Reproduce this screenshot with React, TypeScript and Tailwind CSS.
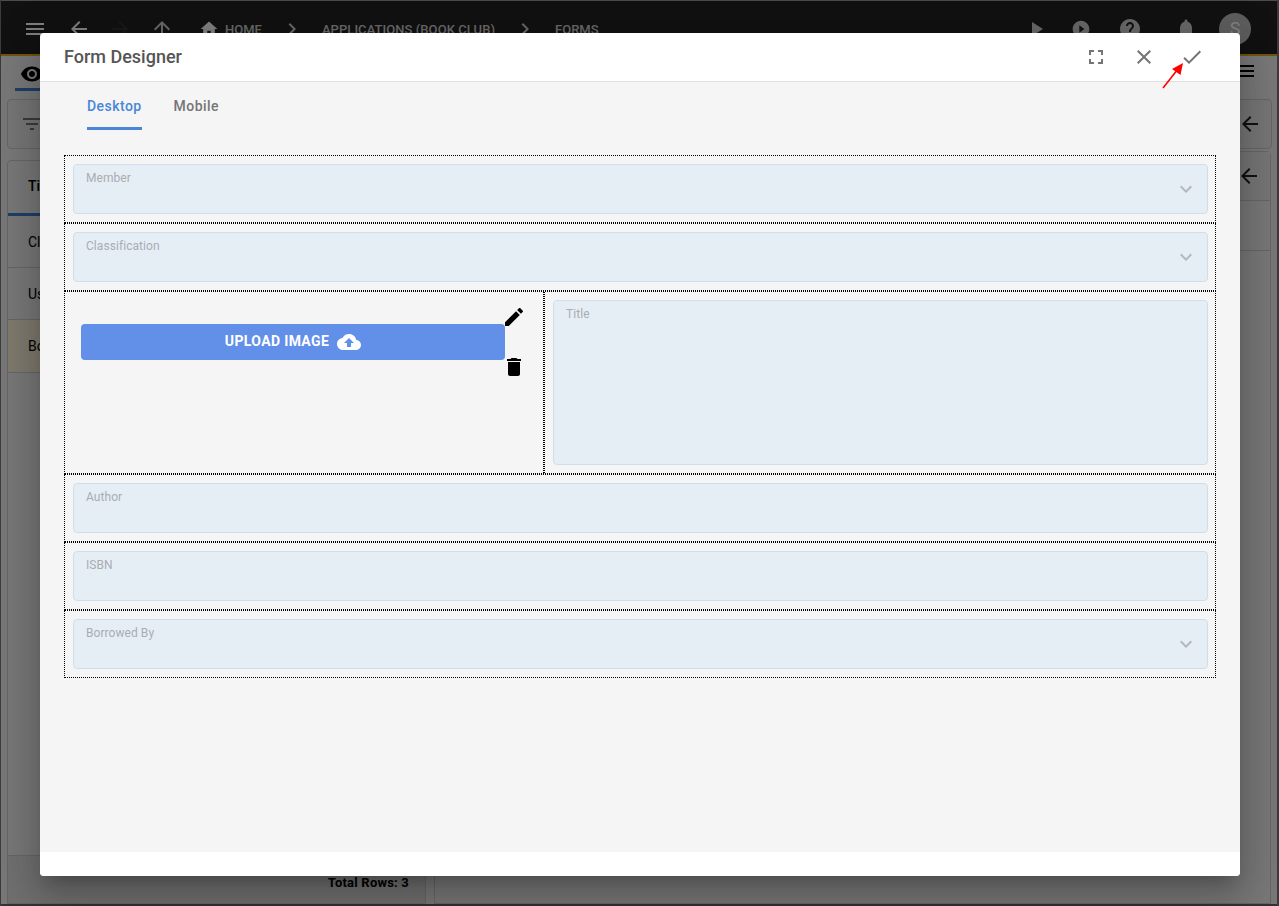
import React from "react";

const P = {
  menu: "M3 18h18v-2H3v2zm0-5h18v-2H3v2zm0-7v2h18V6H3z",
  back: "M20 11H7.83l5.59-5.59L12 4l-8 8 8 8 1.41-1.41L7.83 13H20v-2z",
  forward: "M12 4l-1.41 1.41L16.17 11H4v2h12.17l-5.58 5.59L12 20l8-8z",
  up: "M4 12l1.41 1.41L11 7.83V20h2V7.83l5.58 5.59L20 12l-8-8-8 8z",
  home: "M10 20v-6h4v6h5v-8h3L12 3 2 12h3v8z",
  chevron: "M10 6L8.59 7.41 13.17 12l-4.58 4.59L10 18l6-6z",
  play: "M8 5v14l11-7z",
  playCircle: "M12 2C6.48 2 2 6.48 2 12s4.48 10 10 10 10-4.48 10-10S17.52 2 12 2zm-2 14.5v-9l6 4.5-6 4.5z",
  help: "M12 2C6.48 2 2 6.48 2 12s4.48 10 10 10 10-4.48 10-10S17.52 2 12 2zm1 17h-2v-2h2v2zm2.07-7.75l-.9.92C13.45 12.9 13 13.5 13 15h-2v-.5c0-1.1.45-2.1 1.17-2.83l1.24-1.26c.37-.36.59-.86.59-1.41 0-1.1-.9-2-2-2s-2 .9-2 2H8c0-2.21 1.79-4 4-4s4 1.79 4 4c0 .88-.36 1.68-.93 2.25z",
  bell: "M12 22c1.1 0 2-.9 2-2h-4c0 1.1.89 2 2 2zm6-6v-5c0-3.07-1.64-5.64-4.5-6.32V4c0-.83-.67-1.5-1.5-1.5s-1.5.67-1.5 1.5v.68C7.63 5.36 6 7.92 6 11v5l-2 2v1h16v-1l-2-2z",
  fullscreen: "M7 14H5v5h5v-2H7v-3zm-2-4h2V7h3V5H5v5zm12 7h-3v2h5v-5h-2v3zM14 5v2h3v3h2V5h-5z",
  close: "M19 6.41L17.59 5 12 10.59 6.41 5 5 6.41 10.59 12 5 17.59 6.41 19 12 13.41 17.59 19 19 17.59 13.41 12z",
  check: "M9 16.17L4.83 12l-1.42 1.41L9 19 21 7l-1.41-1.41z",
  more: "M16.59 8.59L12 13.17 7.41 8.59 6 10l6 6 6-6z",
  edit: "M3 17.25V21h3.75L17.81 9.94l-3.75-3.75L3 17.25zM20.71 7.04c.39-.39.39-1.02 0-1.41l-2.34-2.34c-.39-.39-1.02-.39-1.41 0l-1.83 1.83 3.75 3.75 1.83-1.83z",
  del: "M6 19c0 1.1.9 2 2 2h8c1.1 0 2-.9 2-2V7H6v12zM19 4h-3.5l-1-1h-5l-1 1H5v2h14V4z",
  cloud: "M19.35 10.04C18.67 6.59 15.64 4 12 4 9.11 4 6.6 5.64 5.35 8.04 2.34 8.36 0 10.91 0 14c0 3.31 2.69 6 6 6h13c2.76 0 5-2.24 5-5 0-2.64-2.05-4.78-4.65-4.96zM14 13v4h-4v-4H7l5-5 5 5h-3z",
  eye: "M12 4.5C7 4.5 2.73 7.61 1 12c1.73 4.39 6 7.5 11 7.5s9.27-3.11 11-7.5c-1.73-4.39-6-7.5-11-7.5zM12 17c-2.76 0-5-2.24-5-5s2.24-5 5-5 5 2.24 5 5-2.24 5-5 5zm0-8c-1.66 0-3 1.34-3 3s1.34 3 3 3 3-1.34 3-3-1.34-3-3-3z",
  filter: "M10 18h4v-2h-4v2zM3 6v2h18V6H3zm3 7h12v-2H6v2z",
};

function Icon({ d, className = "w-6 h-6" }: { d: string; className?: string }) {
  return (
    <svg viewBox="0 0 24 24" className={"block shrink-0 fill-current " + className}>
      <path d={d} />
    </svg>
  );
}

function Field({ label, select, tall }: { label: string; select?: boolean; tall?: boolean }) {
  return (
    <div
      className={
        "relative flex-1 rounded border border-[#cddfee] bg-[#e6eef5] pl-3 pt-[5px] " +
        (tall ? "h-[165px]" : "h-[50px]")
      }
    >
      <div className="text-xs leading-4 tracking-[0.06px] text-[#a8adb3]">{label}</div>
      {select && (
        <div className="absolute right-[9px] top-[12px] text-[#b3b8bf]">
          <Icon d={P.more} />
        </div>
      )}
    </div>
  );
}

function Row({ label, select }: { label: string; select?: boolean }) {
  return (
    <div className="flex h-[68px] border border-dotted border-black py-2 pl-2 pr-[7px]">
      <Field label={label} select={select} />
    </div>
  );
}

function Background() {
  return (
    <div className="flex h-full flex-col border-l border-r-2 border-[#777] bg-[#f0f0f0]">
      <div className="h-px shrink-0 bg-[#999]" />
      {/* top bar */}
      <div className="box-content flex h-[50px] shrink-0 items-center border-b-2 border-[#e2a81c] bg-[#222] pt-[3px] text-[#d0d0d0]">
        <Icon d={P.menu} className="ml-[22px] h-6 w-6 text-white" />
        <Icon d={P.back} className="ml-[20px] h-6 w-6 text-white" />
        <Icon d={P.forward} className="ml-[17px] h-6 w-6 text-[#333]" />
        <Icon d={P.up} className="ml-[18px] h-6 w-6" />
        <Icon d={P.home} className="ml-[25px] h-5 w-5 text-white" />
        <span className="ml-[6px] mt-[2px] text-[13px] font-medium">HOME</span>
        <Icon d={P.chevron} className="ml-[18px] h-6 w-6" />
        <span className="ml-[18px] mt-[2px] text-[13px] font-medium tracking-[0.06px]">APPLICATIONS (BOOK CLUB)</span>
        <Icon d={P.chevron} className="ml-[18px] h-6 w-6" />
        <span className="ml-[18px] mt-[2px] text-[13px] font-medium">FORMS</span>
        <div className="flex-1" />
        <Icon d={P.play} className="h-6 w-6" />
        <Icon d={P.playCircle} className="ml-[23px] h-5 w-5" />
        <Icon d={P.help} className="ml-[27px] h-6 w-6" />
        <Icon d={P.bell} className="ml-[32px] h-6 w-6" />
        <div className="ml-[21px] mr-[26px] flex h-8 w-8 items-center justify-center rounded-full bg-[#bbb] text-lg text-white">
          S
        </div>
      </div>
      {/* tab strip */}
      <div className="flex h-[43px] shrink-0 items-start justify-between pl-[14px] pr-[20px]">
        <div className="h-[35px] w-[40px] border-b-[3px] border-[#3f7fd0] pl-[5px] pt-[6px]">
          <Icon d={P.eye} className="h-6 w-6 text-black" />
        </div>
        <Icon d={P.menu} className="mt-[3px] h-6 w-6 text-black" />
      </div>
      {/* filter bar */}
      <div className="ml-[6px] mr-[5px] flex h-[50px] shrink-0 items-center justify-between rounded border border-[#ccc] bg-[#ececec] pl-[12px] pr-[9px] text-[#777]">
        <Icon d={P.filter} />
        <Icon d={P.back} className="h-6 w-6 text-[#222]" />
      </div>
      {/* panels */}
      <div className="mt-[2px] flex min-h-0 flex-1 pl-[6px] pr-[6px]">
        <div className="mt-[9px] flex w-[419px] flex-col rounded-t border border-[#ccc] text-sm text-black">
          <div className="flex h-[55px] items-center border-b-[3px] border-[#3f7fd0] pb-[2px] pl-[20px] font-medium">Title</div>
          <div className="flex h-[52px] items-center border-b border-[#ccc] pl-[20px]">Class</div>
          <div className="flex h-[52px] items-center border-b border-[#ccc] pl-[20px]">User</div>
          <div className="flex h-[53px] items-center border-b border-[#ccc] bg-[#fff4dc] pl-[20px]">Book</div>
          <div className="flex-1" />
          <div className="flex h-[48px] items-center justify-end border-t border-[#ccc] bg-[#e0e0e0] pr-[16px] pt-[8px] text-[13px] font-bold tracking-[0.2px]">
            Total Rows: 3
          </div>
        </div>
        <div className="ml-[8px] flex flex-1 flex-col rounded-t border border-[#ccc]">
          <div className="flex h-[49px] items-center justify-end border-b border-[#ccc] bg-[#ececec] pr-[9px] text-[#222]">
            <Icon d={P.back} />
          </div>
          <div className="h-[50px] border-b border-[#ccc]" />
        </div>
      </div>
      <div className="h-[2px] shrink-0 bg-[#666]" />
    </div>
  );
}

export default function App() {
  return (
    <div className="relative h-[906px] w-[1279px] overflow-hidden font-['Roboto',sans-serif]">
      <Background />
      <div className="absolute inset-0 bg-black/50" />
      {/* modal */}
      <div className="absolute left-[40px] top-[33px] flex h-[843px] w-[1200px] flex-col rounded bg-white shadow-[0_11px_15px_-7px_rgba(0,0,0,0.2),0_24px_38px_3px_rgba(0,0,0,0.14),0_9px_46px_8px_rgba(0,0,0,0.12)]">
        <div className="flex h-[49px] shrink-0 items-center border-b border-[#e0e0e0] pl-6 pr-6">
          <div className="flex-1 text-lg font-medium text-[#555]">Form Designer</div>
          <div className="flex w-12 justify-center text-[#757575]"><Icon d={P.fullscreen} /></div>
          <div className="flex w-12 justify-center text-[#757575]"><Icon d={P.close} /></div>
          <div className="flex w-12 justify-center text-[#757575]"><Icon d={P.check} /></div>
        </div>
        <div className="flex min-h-0 flex-1 flex-col bg-[#f5f5f5] px-6">
          <div className="flex h-[48px] items-start pl-[23px] text-sm font-medium tracking-[0.45px]">
            <div className="h-[48px] rounded-t-[2px] border-b-[3px] border-[#4a86d8] pt-[16px] leading-[17px] text-[#4a86d8]">Desktop</div>
            <div className="ml-[32px] pt-[16px] leading-[17px] text-[#757575]">Mobile</div>
          </div>
          <div className="mt-[25px] flex flex-col">
            <Row label="Member" select />
            <Row label="Classification" select />
            <div className="flex h-[183px] border border-dotted border-black">
              <div className="flex h-full w-[479px] items-start border-r border-dotted border-black pl-4">
                <button className="relative mt-[32px] flex h-9 w-[424px] items-center justify-center gap-2 rounded bg-[#628fe8] text-sm font-bold tracking-[0.35px] text-white">
                  <span className="mb-[2px]">UPLOAD IMAGE</span>
                  <Icon d={P.cloud} />
                </button>
                <div className="z-10 ml-[-3px] mt-[13px] flex flex-col gap-[26px] text-black">
                  <Icon d={P.edit} />
                  <Icon d={P.del} />
                </div>
              </div>
              <div className="flex flex-1 border-l border-dotted border-black py-2 pl-2 pr-[7px]">
                <Field label="Title" tall />
              </div>
            </div>
            <Row label="Author" />
            <Row label="ISBN" />
            <Row label="Borrowed By" select />
          </div>
        </div>
        <div className="h-6 shrink-0 rounded-b bg-white" />
      </div>
      {/* annotation arrow */}
      <svg className="absolute left-[1155px] top-[55px] h-[40px] w-[36px]" viewBox="0 0 36 40">
        <line x1="8" y1="33" x2="23" y2="14" stroke="#ff0000" strokeWidth="1.6" />
        <polygon points="28,8 25.5,20 17,14" fill="#ff0000" />
      </svg>
    </div>
  );
}
